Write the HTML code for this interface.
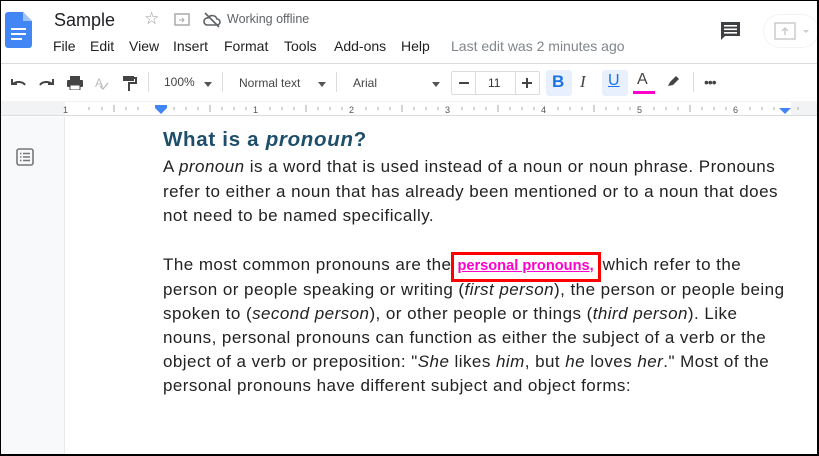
<!DOCTYPE html>
<html><head><meta charset="utf-8"><style>
*{margin:0;padding:0;box-sizing:border-box}
body{width:819px;height:456px;overflow:hidden;font-family:"Liberation Sans",Arial,sans-serif;background:#fff;position:relative}
.abs{position:absolute}
.frame{position:absolute;left:0;top:0;width:819px;height:456px;border-top:1px solid #000;border-left:1px solid #000;border-right:2px solid #000;border-bottom:2px solid #000;pointer-events:none;z-index:10}
.menu span{position:absolute;top:38px;font-size:14px;color:#202124}
.tb{color:#444;font-size:12px}
.sep{position:absolute;top:72px;width:1px;height:20px;background:#dadce0}
.doc{position:absolute;left:163px;font-size:17px;letter-spacing:0.45px;color:#222;white-space:nowrap;line-height:24.5px}
.lk{color:#ff00cc;text-decoration:underline;font-weight:bold;font-size:14.6px;letter-spacing:0;border:3px solid #f00;padding:3px 4px 5px 3px;margin:0 2px 0 0}
</style></head><body>
<svg class="abs" style="left:5px;top:12px" width="27" height="36" viewBox="0 0 27 36"><path d="M3 0h15l9 9v24a3 3 0 0 1-3 3H3a3 3 0 0 1-3-3V3a3 3 0 0 1 3-3z" fill="#4285f4"/><path d="M18 0l9 9h-9z" fill="#a1c2fa"/><rect x="6" y="16" width="15" height="2" fill="#fff"/><rect x="6" y="21" width="15" height="2" fill="#fff"/><rect x="6" y="26" width="11" height="2" fill="#fff"/></svg>
<div class="abs" style="left:54px;top:10px;font-size:18px;color:#202124">Sample</div>
<div class="abs" style="left:144px;top:9px;font-size:17px;color:#999">☆</div>
<svg class="abs" style="left:174px;top:12px" width="16" height="14"><rect x="1" y="2" width="14" height="11" fill="none" stroke="#aaa" stroke-width="1.5"/><path d="M5 8h5M8 6l2 2-2 2" stroke="#aaa" fill="none"/></svg>
<svg class="abs" style="left:203px;top:12px" width="18" height="16" viewBox="0 0 18 16"><path d="M4 13h10a3 3 0 0 0 0-6 5 5 0 0 0-9-1 3.5 3.5 0 0 0-1 7z" fill="none" stroke="#5f6368" stroke-width="1.6"/><path d="M2 1l14 14" stroke="#5f6368" stroke-width="1.6"/></svg>
<div class="abs" style="left:227px;top:12px;font-size:12.5px;color:#5f6368">Working offline</div>
<div class="menu"><span style="left:53px">File</span><span style="left:90px">Edit</span><span style="left:129px">View</span><span style="left:173px">Insert</span><span style="left:224px">Format</span><span style="left:284px">Tools</span><span style="left:334px">Add-ons</span><span style="left:401px">Help</span><span style="left:451px;color:#80868b">Last edit was 2 minutes ago</span></div>
<svg class="abs" style="left:720px;top:21px" width="21" height="20"><path d="M1 1h19v14H5l-4 4z" fill="#3c4043"/><rect x="4" y="4" width="13" height="1.6" fill="#fff"/><rect x="4" y="7.5" width="13" height="1.6" fill="#fff"/><rect x="4" y="11" width="13" height="1.6" fill="#fff"/></svg>
<div class="abs" style="left:763px;top:14px;width:56px;height:34px;border:1px solid #f1f3f4;border-radius:17px"></div>
<svg class="abs" style="left:774px;top:22px" width="40" height="18"><rect x="1" y="1" width="20" height="16" fill="none" stroke="#ccc" stroke-width="1.5"/><path d="M11 13V6M8 9l3-3 3 3" stroke="#ccc" stroke-width="1.5" fill="none"/><path d="M29 8l3 3 3-3z" fill="#ccc"/></svg>
<div class="abs" style="left:0;top:63px;width:819px;height:1px;background:#dadce0"></div>
<svg class="abs" style="left:10px;top:76px" width="110" height="14"><path d="M2 3v5h5M3 8a7 5 0 0 1 12 1" fill="none" stroke="#444" stroke-width="2"/><path d="M43 3v5h-5M42 8a7 5 0 0 0-12 1" fill="none" stroke="#444" stroke-width="2"/><rect x="57" y="4" width="16" height="7" rx="1" fill="#444"/><rect x="60" y="0" width="10" height="4" fill="#444"/><rect x="60" y="9" width="10" height="5" fill="#fff" stroke="#444"/><text x="85" y="11" font-size="12" fill="#bbb" font-family="Liberation Sans">A</text><path d="M90 10l3 3 5-6" stroke="#bbb" fill="none" stroke-width="1.3"/></svg>
<svg class="abs" style="left:122px;top:75px" width="16" height="17"><rect x="1" y="1" width="11" height="5" fill="#444"/><path d="M12 3h2v5H7v8" stroke="#444" stroke-width="2" fill="none"/></svg>
<div class="sep" style="left:148px"></div>
<div class="abs tb" style="left:164px;top:75px">100%</div><div class="abs" style="left:204px;top:82px;border:4px solid transparent;border-top:5px solid #555"></div>
<div class="sep" style="left:222px"></div>
<div class="abs tb" style="left:239px;top:76px">Normal text</div><div class="abs" style="left:318px;top:82px;border:4px solid transparent;border-top:5px solid #555"></div>
<div class="sep" style="left:336px"></div>
<div class="abs tb" style="left:353px;top:76px">Arial</div><div class="abs" style="left:432px;top:82px;border:4px solid transparent;border-top:5px solid #555"></div>
<div class="abs" style="left:451px;top:71px;width:89px;height:24px;border:1px solid #dadce0;border-radius:2px"></div>
<div class="abs" style="left:475px;top:71px;width:1px;height:24px;background:#dadce0"></div>
<div class="abs" style="left:515px;top:71px;width:1px;height:24px;background:#dadce0"></div>
<div class="abs" style="left:459px;top:82px;width:10px;height:2px;background:#444"></div>
<div class="abs tb" style="left:488px;top:76px;color:#333">11</div>
<div class="abs" style="left:522px;top:82px;width:10px;height:2px;background:#444"></div><div class="abs" style="left:526px;top:78px;width:2px;height:10px;background:#444"></div>
<div class="abs" style="left:546px;top:70px;width:26px;height:26px;background:#e8f0fe;border-radius:3px"></div>
<div class="abs" style="left:552px;top:72px;font-size:17px;font-weight:bold;color:#1a73e8">B</div>
<div class="abs" style="left:580px;top:72px;font-size:17px;font-style:italic;color:#444;font-family:'Liberation Serif',serif">I</div>
<div class="abs" style="left:602px;top:70px;width:26px;height:26px;background:#e8f0fe;border-radius:3px"></div>
<div class="abs" style="left:608px;top:72px;font-size:16px;color:#1a73e8;text-decoration:underline">U</div>
<div class="abs" style="left:637px;top:71px;font-size:16px;color:#444">A</div>
<div class="abs" style="left:633px;top:91px;width:22px;height:3px;background:#ff00cc"></div>
<svg class="abs" style="left:666px;top:74px" width="16" height="14"><path d="M2 12l2-4 6-6 3 3-6 6z" fill="#444"/></svg>
<div class="sep" style="left:693px"></div>
<div class="abs" style="left:704px;top:74px;font-size:14px;color:#444;letter-spacing:-1px">•••</div>
<div class="abs" style="left:0;top:101px;width:819px;height:15px;background:#f1f3f4;border-bottom:1px solid #dadce0"></div>
<div class="abs" style="left:65px;top:102px;width:726px;height:13px;background:#fff"></div>
<svg class="abs" style="left:0;top:101px" width="819" height="16" font-family="Liberation Sans" font-size="9" fill="#555">
<g stroke="#aaa"><path d="M89 6v3M102 6v3M126 6v3M138 6v3M174 6v3M186 6v3M198 6v3M222 6v3M234 6v3M246 6v3M270 6v3M282 6v3M294 6v3M318 6v3M330 6v3M342 6v3M366 6v3M378 6v3M390 6v3M414 6v3M426 6v3M438 6v3M462 6v3M474 6v3M486 6v3M510 6v3M522 6v3M534 6v3M558 6v3M570 6v3M582 6v3M606 6v3M618 6v3M630 6v3M654 6v3M666 6v3M678 6v3M702 6v3M714 6v3M726 6v3M750 6v3M762 6v3M774 6v3M798 6v3"/><path d="M114 4v7M210 4v7M306 4v7M402 4v7M498 4v7M594 4v7M690 4v7"/></g>
<text x="63" y="12">1</text><text x="253" y="12">1</text><text x="349" y="12">2</text><text x="445" y="12">3</text><text x="541" y="12">4</text><text x="637" y="12">5</text><text x="733" y="12">6</text>
<path d="M155 4h12v3l-6 6-6-6z" fill="#4285f4"/><path d="M779 7h12l-6 6z" fill="#4285f4"/></svg>
<div class="abs" style="left:0;top:117px;width:65px;height:339px;background:#f8f9fa;border-right:1px solid #e8eaed"></div>
<svg class="abs" style="left:16px;top:148px" width="18" height="18"><rect x="1" y="1" width="16" height="16" rx="2" fill="none" stroke="#777" stroke-width="1.6"/><path d="M4 5.5h1.5M7 5.5h7M4 9h1.5M7 9h7M4 12.5h1.5M7 12.5h7" stroke="#777" stroke-width="1.4"/></svg>
<div class="abs" style="left:163px;top:128px;font-size:20.5px;letter-spacing:0.7px;font-weight:bold;color:#1e4e6b;white-space:nowrap">What is a <i>pronoun</i>?</div>
<div class="doc" style="top:155px">A <i>pronoun</i> is a word that is used instead of a noun or noun phrase. Pronouns<br>refer to either a noun that has already been mentioned or to a noun that does<br>not need to be named specifically.</div>
<div class="doc" style="top:253px;line-height:24px">The most common pronouns are the<span class="lk">personal pronouns,</span>which refer to the<br>person or people speaking or writing (<i>first person</i>), the person or people being<br>spoken to (<i>second person</i>), or other people or things (<i>third person</i>). Like<br>nouns, personal pronouns can function as either the subject of a verb or the<br>object of a verb or preposition: "<i>She</i> likes <i>him</i>, but <i>he</i> loves <i>her</i>." Most of the<br>personal pronouns have different subject and object forms:</div>
<div class="frame"></div>
</body></html>
